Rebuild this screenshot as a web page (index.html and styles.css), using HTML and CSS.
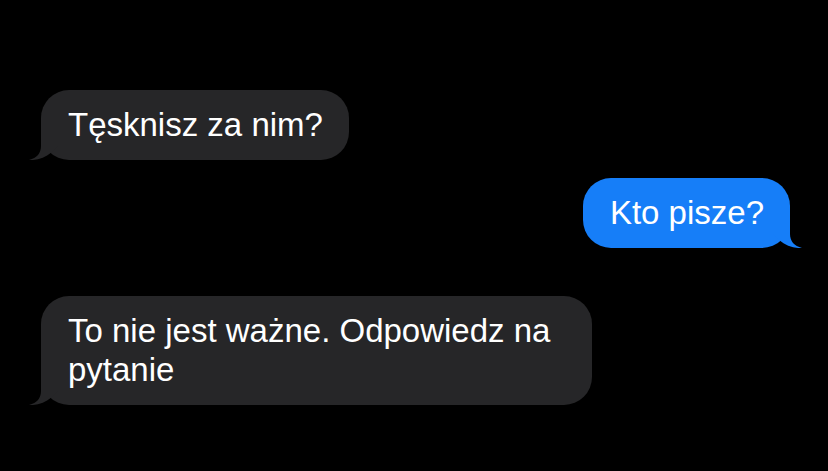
FILE: index.html
```html
<!DOCTYPE html>
<html lang="pl">

<head>
  <meta charset="utf-8" />
  <title>Wiadomości</title>
  <link rel="stylesheet" href="styles.css">
</head>

<body>
  <div class="thread">
    <div class="msg them">
      Tęsknisz za nim?
      <svg class="tail" viewBox="0 0 30 30"><path d="M12 0 L12 16 C12 23 8 28 0 30 C8 30.5 16 28 23 22 L30 15 L30 0 Z" /></svg>
    </div>

    <div class="msg me">
      Kto pisze?
      <svg class="tail" viewBox="0 0 30 30"><path d="M12 0 L12 16 C12 23 8 28 0 30 C8 30.5 16 28 23 22 L30 15 L30 0 Z" /></svg>
    </div>

    <div class="msg them later">
      To nie jest ważne. Odpowiedz na pytanie
      <svg class="tail" viewBox="0 0 30 30"><path d="M12 0 L12 16 C12 23 8 28 0 30 C8 30.5 16 28 23 22 L30 15 L30 0 Z" /></svg>
    </div>
  </div>
</body>

</html>
```

FILE: styles.css
```css
body {
  background-color: #000;
  margin: 0;
  font-family: 'Liberation Sans', Arial, sans-serif;
}

.thread {
  display: flex;
  flex-direction: column;
  align-items: flex-start;
  padding: 90px 38px 0 41px;
}

.msg {
  position: relative;
  max-width: 498px;
  padding: 15px 26px 16px 27px;
  border-radius: 28px;
  color: #fff;
  font-size: 33px;
  line-height: 39px;
}

.msg + .msg {
  margin-top: 18px;
}

.msg.later {
  margin-top: 48px;
}

.them {
  background-color: #262628;
}

.me {
  align-self: flex-end;
  background-color: #167ef8;
}

/* bubble tail, drawn over the bottom corner */
.tail {
  position: absolute;
  bottom: 0;
  width: 30px;
  height: 30px;
}

.them .tail {
  left: -12px;
  fill: #262628;
}

.me .tail {
  right: -12px;
  fill: #167ef8;
  transform: scaleX(-1);
}
```
